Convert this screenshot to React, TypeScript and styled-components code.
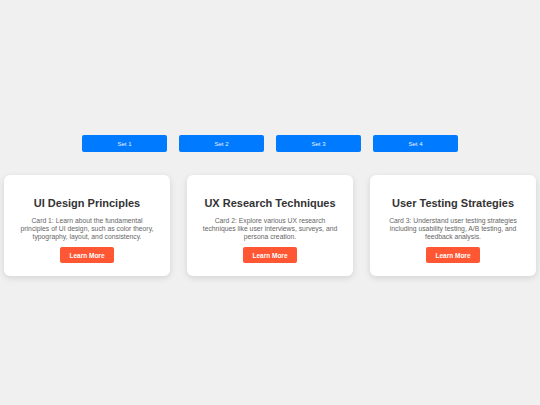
import styled, { createGlobalStyle } from "styled-components";

const GlobalStyle = createGlobalStyle`
  html, body {
    margin: 0;
    padding: 0;
    background: #f0f0f0;
    font-family: "Liberation Sans", Arial, sans-serif;
  }
`;

interface ICard {
  title: string;
  text: string;
}

const cards: ICard[] = [
  {
    title: "UI Design Principles",
    text: "Card 1: Learn about the fundamental principles of UI design, such as color theory, typography, layout, and consistency.",
  },
  {
    title: "UX Research Techniques",
    text: "Card 2: Explore various UX research techniques like user interviews, surveys, and persona creation.",
  },
  {
    title: "User Testing Strategies",
    text: "Card 3: Understand user testing strategies including usability testing, A/B testing, and feedback analysis.",
  },
];

export default function App() {
  return (
    <>
      <GlobalStyle />
      <Page>
        <SetBar>
          {[1, 2, 3, 4].map((n) => (
            <SetButton key={n}>Set {n}</SetButton>
          ))}
        </SetBar>
        <CardRow>
          {cards.map((c) => (
            <Card key={c.title}>
              <Title>{c.title}</Title>
              <Desc>{c.text}</Desc>
              <MoreButton>Learn More</MoreButton>
            </Card>
          ))}
        </CardRow>
      </Page>
    </>
  );
}

const Page = styled.div`
  min-height: 100vh;
  box-sizing: border-box;
  display: flex;
  flex-direction: column;
  align-items: center;
  justify-content: center;
  padding-top: 6px;
`;

const SetBar = styled.div`
  display: flex;
  gap: 12px;
  margin-bottom: 23px;
`;

const SetButton = styled.button`
  width: 85px;
  height: 17px;
  border: none;
  border-radius: 2px;
  background: #007bff;
  color: #e8f1ff;
  font-family: inherit;
  font-size: 6px;
  font-weight: normal;
  padding: 0;
  cursor: pointer;
`;

const CardRow = styled.div`
  display: flex;
  gap: 17px;
`;

const Card = styled.div`
  width: 166px;
  height: 101px;
  box-sizing: border-box;
  background: #fff;
  border-radius: 6px;
  box-shadow: 0 2px 6px rgba(0, 0, 0, 0.12);
  display: flex;
  flex-direction: column;
  align-items: center;
  text-align: center;
  padding: 21px 15px 0;
`;

const Title = styled.h2`
  margin: 0;
  font-size: 11px;
  font-weight: bold;
  color: #333;
  line-height: 14px;
  white-space: nowrap;
`;

const Desc = styled.p`
  margin: 7px 0 6px;
  font-size: 6.8px;
  line-height: 8px;
  color: #666;
`;

const MoreButton = styled.button`
  width: 54px;
  height: 16px;
  border: none;
  border-radius: 2px;
  background: #ff5733;
  color: #fff;
  font-family: inherit;
  font-size: 6.5px;
  font-weight: bold;
  padding: 0;
  cursor: pointer;
`;
